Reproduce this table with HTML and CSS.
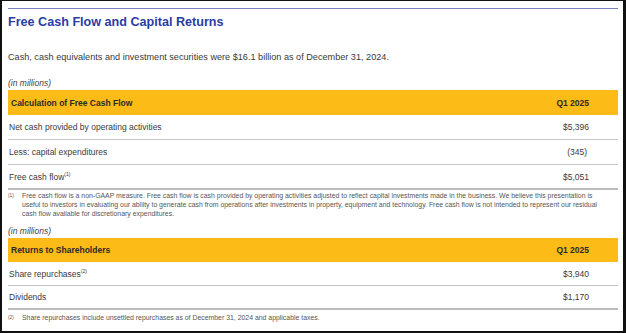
FILE: index.html
```html
<!DOCTYPE html>
<html lang="en">
<head>
<meta charset="utf-8">
<title>Free Cash Flow and Capital Returns</title>
<link rel="stylesheet" href="styles.css">
</head>
<body>
<div class="frame">
  <div class="rule"></div>
  <h1 class="title">Free Cash Flow and Capital Returns</h1>
  <p class="intro">Cash, cash equivalents and investment securities were $16.1 billion as of December 31, 2024.</p>

  <p class="unit">(in millions)</p>
  <div class="table">
    <div class="row head"><span>Calculation of Free Cash Flow</span><span class="val">Q1 2025</span></div>
    <div class="row"><span>Net cash provided by operating activities</span><span class="val">$5,396</span></div>
    <div class="row"><span>Less: capital expenditures</span><span class="val paren">(345)</span></div>
    <div class="row last"><span>Free cash flow<sup>(1)</sup></span><span class="val">$5,051</span></div>
  </div>
  <div class="note"><sup class="nmark">(1)</sup><p class="ntext">Free cash flow is a non-GAAP measure. Free cash flow is cash provided by operating activities adjusted to reflect capital investments made in the business. We believe this presentation is useful to investors in evaluating our ability to generate cash from operations after investments in property, equipment and technology. Free cash flow is not intended to represent our residual cash flow available for discretionary expenditures.</p></div>

  <p class="unit unit2">(in millions)</p>
  <div class="table">
    <div class="row head head2"><span>Returns to Shareholders</span><span class="val">Q1 2025</span></div>
    <div class="row r2"><span>Share repurchases<sup>(2)</sup></span><span class="val">$3,940</span></div>
    <div class="row last r2b"><span>Dividends</span><span class="val">$1,170</span></div>
  </div>
  <div class="note note2"><sup class="nmark">(2)</sup><p class="ntext">Share repurchases include unsettled repurchases as of December 31, 2024 and applicable taxes.</p></div>
</div>
</body>
</html>
```

FILE: styles.css
```css
* { box-sizing: border-box; }
html, body { margin: 0; padding: 0; background: #fff; }
body { font-family: "Liberation Sans", Arial, sans-serif; color: #3a3a3a; }

.frame {
  width: 626px;
  height: 333px;
  border-style: solid;
  border-color: #111;
  border-width: 1px 3px 2px 2px;
  padding: 7px 5px 0 6px;
  overflow: hidden;
}

.rule { height: 1px; background: #7c82bf; }

.title {
  margin: 5px 0 0;
  font-size: 12.6px;
  line-height: 16px;
  font-weight: bold;
  color: #2b3ca6;
}

.intro {
  margin: 21px 0 0;
  font-size: 9.15px;
  line-height: 12px;
  color: #3a3a3a;
}

.unit {
  margin: 14px 0 0;
  font-size: 8.5px;
  line-height: 12px;
  font-style: italic;
  color: #444;
}

.table { margin-top: 1px; }

.row {
  display: flex;
  justify-content: space-between;
  align-items: center;
  height: 25px;
  padding: 0 29px 0 1px;
  font-size: 8.5px;
  border-bottom: 1px solid #c6c6c6;
}

.row.last { border-bottom: 2px solid #bdbdbd; }

.row.head {
  background: #fcbb16;
  font-weight: bold;
  color: #2a2a2a;
  border-bottom: 0;
  padding-left: 3px;
}

.head2 { height: 24px; }
.r2 { height: 24px; }
.r2b { height: 24px; }

.val { text-align: right; }
.paren { padding-right: 2px; }

sup {
  font-size: 5px;
  line-height: 0;
  vertical-align: 4px;
}

.note {
  display: flex;
  margin-top: 1px;
  font-size: 6.9px;
  line-height: 9px;
  color: #555;
}

.nmark {
  flex: none;
  width: 14px;
  font-size: 4.8px;
  line-height: 9px;
  vertical-align: top;
}

.ntext { margin: 0; flex: 1; padding-right: 8px; }

.unit2 { margin-top: 7px; }
.note2 { margin-top: 3px; }
```
